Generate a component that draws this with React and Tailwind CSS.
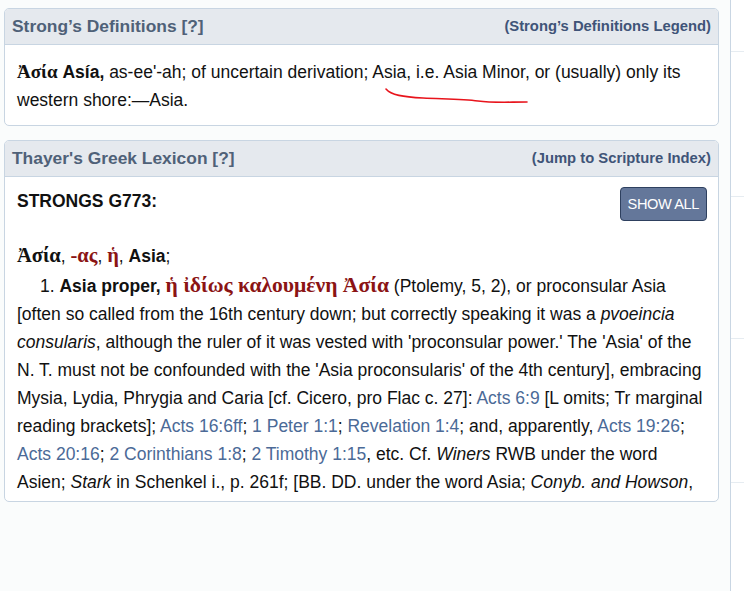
const GREEK = { fontFamily: '"Liberation Serif", "DejaVu Serif", serif' }

function Ref({ children }) {
  return <a className="text-[#4b6a97] no-underline">{children}</a>
}

function Panel({ title, aside, children, className }) {
  return (
    <div className={"rounded-[5px] border border-[#c8d5e2] bg-white overflow-hidden " + (className || '')}>
      <div className="flex items-center justify-between h-[36px] px-[7px] bg-[#e5e9ee] border-b border-[#c8d5e2]">
        <span className="text-[17.4px] font-bold text-[#4f6178]">{title}</span>
        <span className="text-[14.8px] font-bold text-[#3f5478]">{aside}</span>
      </div>
      {children}
    </div>
  )
}

export default function App() {
  return (
    <div
      className="flex w-[744px] h-[591px] bg-[#fafcfc] overflow-hidden text-[#111]"
      style={{ fontFamily: '"Liberation Sans", Arial, sans-serif' }}
    >
      <div className="w-[719px] pl-[4px] pt-[8px] flex flex-col gap-[14px]">
        <Panel title="Strong’s Definitions [?]" aside="(Strong’s Definitions Legend)" className="relative">
          <p className="px-[12px] pt-[13px] pb-[11px] text-[17.5px] leading-[28px]">
            <b className="text-[19px] leading-[20px]" style={GREEK}>Ἀσία</b> <b>Asía,</b> as-ee'-ah; of uncertain derivation; Asia, i.e. Asia Minor, or (usually) only its western shore:—Asia.
          </p>
          <svg className="absolute left-[378px] top-[76px]" width="150" height="20" viewBox="0 0 150 20">
            <path d="M3 4 C 8 10, 20 12, 40 13 C 60 14, 80 14, 95 16 C 110 18, 125 17, 144 17" fill="none" stroke="#e8141c" strokeWidth="1.6" strokeLinecap="round" />
          </svg>
        </Panel>

        <Panel title="Thayer's Greek Lexicon [?]" aside="(Jump to Scripture Index)" className="h-[362px]">
          <div className="px-[12px] pt-[10px] text-[17.5px] leading-[28px]">
            <div className="flex items-start justify-between">
              <b className="leading-[28px]">STRONGS G773:</b>
              <button className="h-[34px] px-[7px] mr-[-1px] rounded-[4px] bg-[#64779a] border border-[#2e405f] text-white text-[14.6px] tracking-[-0.4px]">
                SHOW ALL
              </button>
            </div>
            <div className="mt-[21px]">
              <span className="text-[20.5px] leading-[20px] font-semibold" style={GREEK}>Ἀσία</span>,{' '}
              <span className="text-[20.5px] leading-[20px] font-semibold text-[#8b1414]" style={GREEK}>-ας</span>,{' '}
              <span className="text-[20.5px] leading-[20px] font-semibold text-[#8b1414]" style={GREEK}>ἡ</span>, <b>Asia</b>;
            </div>
            <p className="mt-[2px] indent-[23px]">
              1. <b>Asia proper,</b>{' '}
              <b className="text-[21.6px] leading-[20px] text-[#8b1414]" style={GREEK}>ἡ ἰδίως καλουμένη Ἀσία</b> (Ptolemy, 5, 2), or proconsular Asia [often so called from the 16th century down; but correctly speaking it was a <i>pvoeincia consularis</i>, although the ruler of it was vested with 'proconsular power.' The 'Asia' of the N. T. must not be confounded with the 'Asia proconsularis' of the 4th century], embracing Mysia, Lydia, Phrygia and Caria [cf. Cicero, pro Flac c. 27]: <Ref>Acts 6:9</Ref> [L omits; Tr marginal reading brackets]; <Ref>Acts 16:6ff</Ref>; <Ref>1 Peter 1:1</Ref>; <Ref>Revelation 1:4</Ref>; and, apparently, <Ref>Acts 19:26</Ref>; <Ref>Acts 20:16</Ref>; <Ref>2 Corinthians 1:8</Ref>; <Ref>2 Timothy 1:15</Ref>, etc. Cf. <i>Winers</i> RWB under the word Asien; <i>Stark</i> in Schenkel i., p. 261f; [BB. DD. under the word Asia; <i>Conyb. and Howson</i>, St. Paul, chapter 8; Lewin, St. Paul, i. 190f; Wieseler, Chron. d. apost. Zeitalt. p. 31ff].
            </p>
          </div>
        </Panel>
      </div>

      <div className="ml-[11px] flex-1 border-l border-[#c9d6e3] bg-white flex flex-col">
        <div className="h-[52px] border-b border-[#e6ecf1]" />
        <div className="h-[145px] border-b border-[#e6ecf1]" />
        <div className="h-[142px] border-b border-[#e6ecf1]" />
        <div className="h-[144px] border-b border-[#e6ecf1]" />
      </div>
    </div>
  )
}
